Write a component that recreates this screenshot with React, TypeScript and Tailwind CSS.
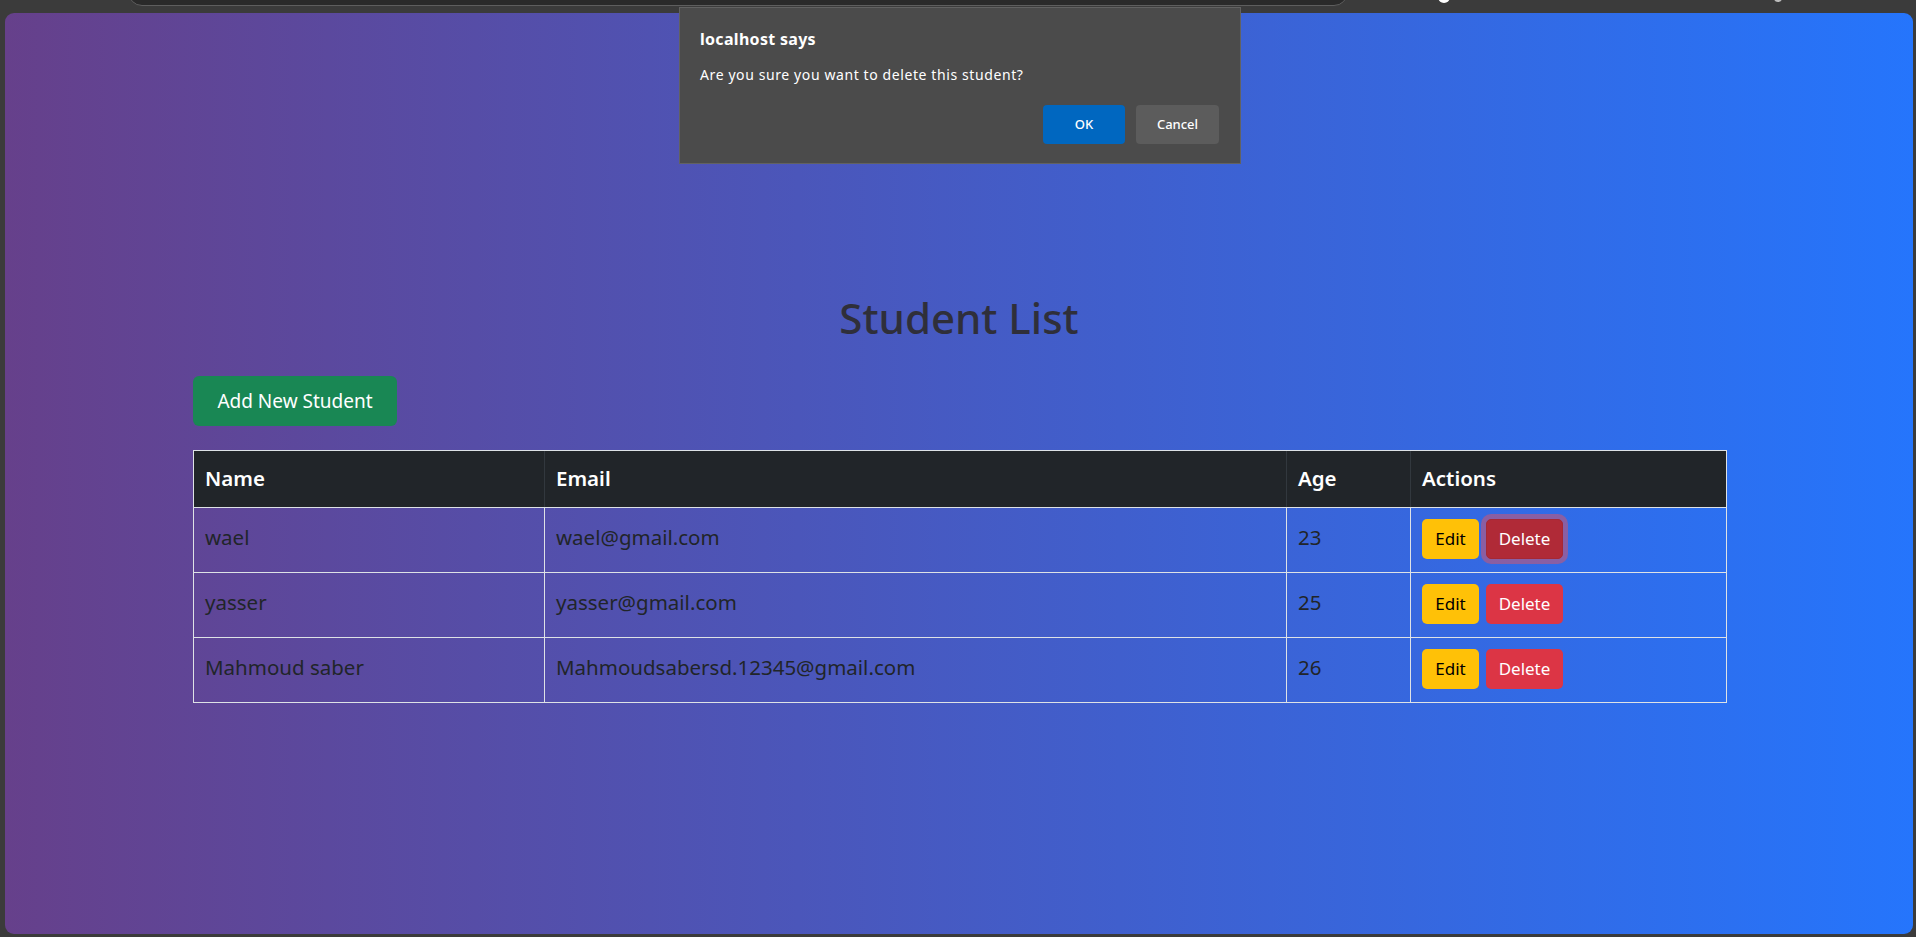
const students = [
  { name: "wael", email: "wael@gmail.com", age: 23 },
  { name: "yasser", email: "yasser@gmail.com", age: 25 },
  { name: "Mahmoud saber", email: "Mahmoudsabersd.12345@gmail.com", age: 26 },
];

const App = () => {
  return (
    <div
      className="relative w-[1916px] h-[937px] bg-[#3b3b3b] overflow-hidden"
      style={{ fontFamily: '"Noto Sans", "Open Sans", sans-serif' }}
    >
      {/* browser chrome strip */}
      <div className="h-[13px] relative">
        <div className="absolute left-[128px] top-[-20px] w-[1220px] h-[26px] bg-[#2a2a2a] border border-[#5e5e5e] rounded-b-[14px]" />
        <div className="absolute left-[1438px] top-[-9px] w-[12px] h-[12px] rounded-full bg-white" />
        <div className="absolute left-[1774px] top-[-10px] w-[8px] h-[12px] rounded-full bg-[#bdbdbd]" />
      </div>

      {/* page */}
      <div className="ml-[5px] w-[1908px] h-[921px] rounded-[9px] bg-[linear-gradient(to_right,#66408b,#2575fc)] pt-[275px]">
        <h1 className="text-center text-[42px] leading-[60px] font-medium text-[#2f2f3a]">Student List</h1>

        <div className="ml-[188px] w-[1534px] mt-[28px]">
          <button className="h-[50px] w-[204px] rounded-[6px] bg-[#198754] text-white text-[19px]">
            Add New Student
          </button>

          <div className="mt-[24px] border border-[#dee2e6] text-[#212529] text-[20.5px]">
            <div className="grid grid-cols-[351px_742px_124px_315px] bg-[#212529] text-white font-semibold h-[56px]">
              <div className="px-[11px] pt-[12px] border-r border-[#32383e]">Name</div>
              <div className="px-[11px] pt-[12px] border-r border-[#32383e]">Email</div>
              <div className="px-[11px] pt-[12px] border-r border-[#32383e]">Age</div>
              <div className="px-[11px] pt-[12px]">Actions</div>
            </div>
            {students.map((s, i) => (
              <div
                key={s.email}
                className="grid grid-cols-[351px_742px_124px_315px] h-[65px] border-t border-[#dee2e6]"
              >
                <div className="px-[11px] pt-[14px] border-r border-[#dee2e6]">{s.name}</div>
                <div className="px-[11px] pt-[14px] border-r border-[#dee2e6]">{s.email}</div>
                <div className="px-[11px] pt-[14px] border-r border-[#dee2e6]">{s.age}</div>
                <div className="px-[11px] pt-[11px] flex items-start gap-[7px]">
                  <button className="h-[40px] w-[57px] rounded-[5px] bg-[#ffc107] text-black text-[17px]">
                    Edit
                  </button>
                  {i === 0 ? (
                    <button className="h-[40px] w-[77px] rounded-[5px] bg-[#b02a37] border border-[#a52834] text-white text-[17px] shadow-[0_0_0_5px_rgba(225,83,97,0.5)]">
                      Delete
                    </button>
                  ) : (
                    <button className="h-[40px] w-[77px] rounded-[5px] bg-[#dc3545] text-white text-[17px]">
                      Delete
                    </button>
                  )}
                </div>
              </div>
            ))}
          </div>
        </div>
      </div>

      {/* alert dialog */}
      <div className="absolute left-[679px] top-[7px] w-[562px] h-[157px] bg-[#4b4b4b] border border-[#626262] px-[20px] pt-[20px]">
        <div className="text-white font-bold text-[16px] tracking-[0.3px] leading-[22px]">localhost says</div>
        <div className="text-white text-[14px] tracking-[0.6px] leading-[20px] mt-[15px]">
          Are you sure you want to delete this student?
        </div>
        <div className="flex justify-end gap-[11px] mt-[20px] pr-[1px]">
          <button className="w-[82px] h-[39px] rounded-[4px] bg-[#0067c0] text-white text-[13px] font-medium">OK</button>
          <button className="w-[83px] h-[39px] rounded-[4px] bg-[#5c5c5c] text-white text-[13px] font-medium">Cancel</button>
        </div>
      </div>
    </div>
  );
};

export default App;
